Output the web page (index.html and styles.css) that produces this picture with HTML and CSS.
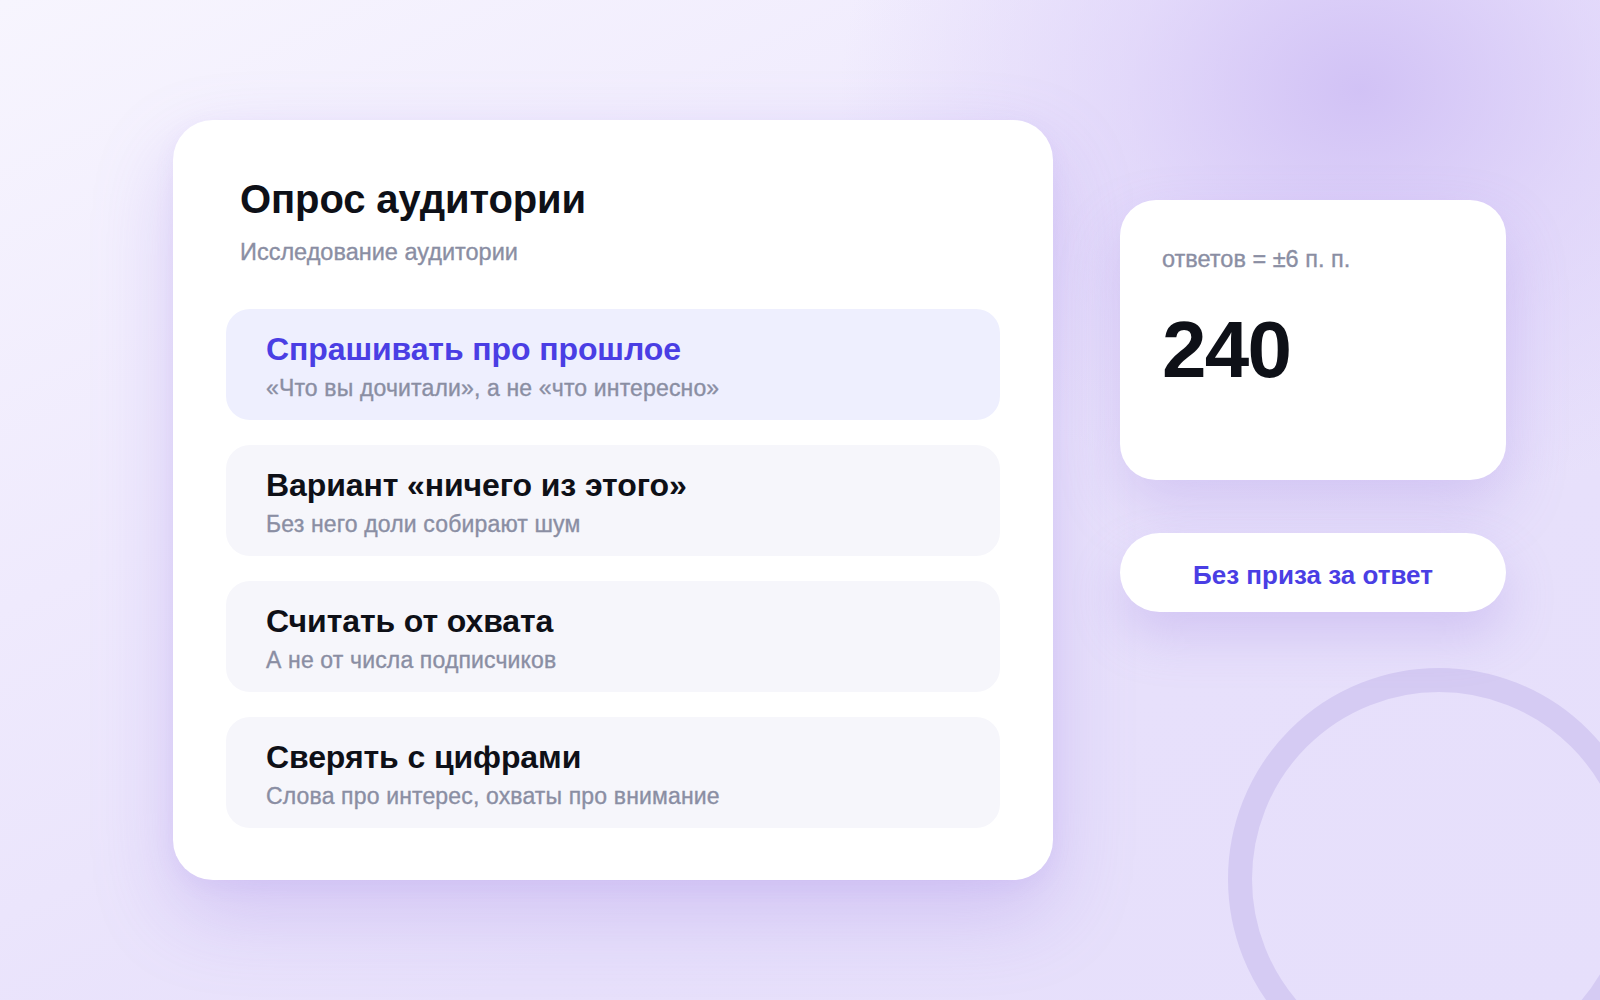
FILE: index.html
```html
<!DOCTYPE html>
<html lang="ru">
<head>
<meta charset="utf-8">
<title>Опрос аудитории</title>
<link rel="stylesheet" href="styles.css">
</head>
<body>
<div class="backdrop"><div class="ring"></div></div>
<main class="stage">
  <section class="card">
    <header class="card-head">
      <h1 class="title">Опрос аудитории</h1>
      <p class="subtitle">Исследование аудитории</p>
    </header>
    <ul class="options">
      <li class="option active">
        <div class="opt-title">Спрашивать про прошлое</div>
        <div class="opt-sub">«Что вы дочитали», а не «что интересно»</div>
      </li>
      <li class="option">
        <div class="opt-title">Вариант «ничего из этого»</div>
        <div class="opt-sub">Без него доли собирают шум</div>
      </li>
      <li class="option">
        <div class="opt-title">Считать от охвата</div>
        <div class="opt-sub">А не от числа подписчиков</div>
      </li>
      <li class="option">
        <div class="opt-title">Сверять с цифрами</div>
        <div class="opt-sub">Слова про интерес, охваты про внимание</div>
      </li>
    </ul>
  </section>
  <aside class="side">
    <div class="stat">
      <div class="stat-label">ответов = ±6 п. п.</div>
      <div class="stat-value">240</div>
    </div>
    <div class="pill">Без приза за ответ</div>
  </aside>
</main>
</body>
</html>
```

FILE: styles.css
```css
* { box-sizing: border-box; }

html, body {
  margin: 0;
  padding: 0;
  width: 1600px;
  height: 1000px;
  overflow: hidden;
}

body {
  position: relative;
  font-family: "Liberation Sans", Arial, sans-serif;
  background:
    radial-gradient(ellipse 520px 420px at 1360px 90px, rgba(208, 192, 245, 0.95) 0%, rgba(216, 202, 248, 0.55) 45%, rgba(226, 216, 250, 0) 100%),
    linear-gradient(155deg, #f7f5fe 0%, #efeafd 35%, #e7e0fb 70%, #e6dffb 100%);
  color: #0f1118;
}

.backdrop {
  position: absolute;
  left: 0;
  top: 0;
  width: 1600px;
  height: 1000px;
  overflow: hidden;
}

.ring {
  position: absolute;
  left: 1228px;
  top: 668px;
  width: 422px;
  height: 422px;
  border-radius: 50%;
  border: 24px solid #d5cbf3;
}

.stage {
  position: relative;
  display: flex;
  align-items: flex-start;
  gap: 67px;
  padding: 120px 0 0 173px;
}

.card {
  width: 880px;
  height: 760px;
  background: #ffffff;
  border-radius: 40px;
  padding: 56px 53px 0 53px;
  box-shadow: 0 34px 80px rgba(150, 120, 225, 0.28), 0 6px 20px rgba(150, 120, 225, 0.08);
}

.card-head {
  padding-left: 14px;
}

.title {
  margin: 0;
  font-size: 40px;
  line-height: 46px;
  font-weight: 700;
  color: #0e1017;
  letter-spacing: -0.1px;
}

.subtitle {
  margin: 16px 0 0 0;
  font-size: 23.5px;
  line-height: 28px;
  color: #8a8ea3;
  -webkit-text-stroke: 0.35px #8a8ea3;
}

.options {
  list-style: none;
  margin: 43px 0 0 0;
  padding: 0;
  display: flex;
  flex-direction: column;
  gap: 25px;
}

.option {
  height: 111px;
  border-radius: 24px;
  background: #f6f6fb;
  padding: 22px 38px 0 40px;
}

.option.active {
  background: #eeeffe;
}

.opt-title {
  font-size: 32px;
  line-height: 36px;
  font-weight: 700;
  color: #0e1017;
  letter-spacing: -0.1px;
}

.option.active .opt-title {
  color: #4a3ee4;
}

.opt-sub {
  margin-top: 7px;
  font-size: 23px;
  line-height: 28px;
  color: #8a8ea3;
  -webkit-text-stroke: 0.35px #8a8ea3;
  letter-spacing: 0.15px;
}

.side {
  width: 386px;
  margin-top: 80px;
  display: flex;
  flex-direction: column;
  gap: 53px;
}

.stat {
  height: 280px;
  background: #ffffff;
  border-radius: 36px;
  padding: 45px 42px 0 42px;
  box-shadow: 0 28px 60px rgba(150, 120, 225, 0.26);
}

.stat-label {
  font-size: 23.5px;
  line-height: 28px;
  color: #8a8ea3;
  -webkit-text-stroke: 0.35px #8a8ea3;
}

.stat-value {
  margin-top: 37px;
  font-size: 80px;
  line-height: 80px;
  font-weight: 700;
  letter-spacing: -1.8px;
  color: #0e1017;
}

.pill {
  height: 79px;
  border-radius: 40px;
  background: #ffffff;
  display: flex;
  align-items: center;
  justify-content: center;
  padding-top: 5px;
  font-size: 26px;
  font-weight: 700;
  color: #4a3ee4;
  box-shadow: 0 24px 50px rgba(150, 120, 225, 0.26);
}
```
